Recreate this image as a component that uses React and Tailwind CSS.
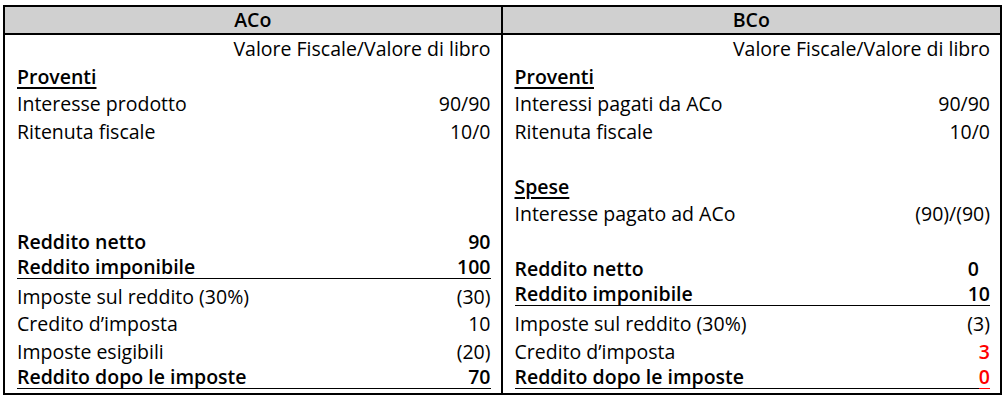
import React from "react";

// Righe della tabella per ciascuna società
const aco = [
  { value: "Valore Fiscale/Valore di libro" },
  { label: "Proventi", head: true },
  { label: "Interesse prodotto", value: "90/90" },
  { label: "Ritenuta fiscale", value: "10/0" },
  {},
  {},
  {},
  { label: "Reddito netto", value: "90", bold: true },
  { label: "Reddito imponibile", value: "100", bold: true, line: true },
  { label: "Imposte sul reddito (30%)", value: "(30)" },
  { label: "Credito d’imposta", value: "10" },
  { label: "Imposte esigibili", value: "(20)" },
  { label: "Reddito dopo le imposte", value: "70", bold: true, line: true },
];

const bco = [
  { value: "Valore Fiscale/Valore di libro" },
  { label: "Proventi", head: true },
  { label: "Interessi pagati da ACo", value: "90/90" },
  { label: "Ritenuta fiscale", value: "10/0" },
  {},
  { label: "Spese", head: true },
  { label: "Interesse pagato ad ACo", value: "(90)/(90)" },
  {},
  { label: "Reddito netto", value: "0", bold: true, shift: true },
  { label: "Reddito imponibile", value: "10", bold: true, line: true },
  { label: "Imposte sul reddito (30%)", value: "(3)" },
  { label: "Credito d’imposta", value: "3", red: true },
  { label: "Reddito dopo le imposte", value: "0", bold: true, line: true, red: true },
];

const Row = ({ label, value, bold, line, red, head, shift }) => {
  const weight = bold ? "font-semibold" : "font-normal";
  // i valori in rosso sono sempre in grassetto
  const valWeight = bold || red ? "font-semibold" : "font-normal";
  const color = red ? "text-[#ff0000]" : "text-black";

  if (head) {
    return (
      <div className="h-[27.5px] flex items-center pl-3 pr-[10px]">
        <span className="font-semibold underline underline-offset-[3px] decoration-[1.5px]">{label}</span>
      </div>
    );
  }

  if (line) {
    return (
      <div className="h-[27.5px] flex items-end pl-3 pr-[10px] pb-[4px]">
        <div className="flex-1 flex border-b-[1.5px] border-black leading-[22px]">
          <span className={weight}>{label}</span>
        </div>
        <span
          className={`${valWeight} ${color} leading-[22px] border-b-[1.5px] ${red ? "border-[#ff0000]" : "border-black"}`}
        >
          {value}
        </span>
      </div>
    );
  }

  return (
    <div className="h-[27.5px] flex items-center justify-between pl-3 pr-[10px]">
      <span className={weight}>{label}</span>
      <span className={`${valWeight} ${color} ${shift ? "pr-[11px]" : ""}`}>{value}</span>
    </div>
  );
};

const Column = ({ title, rows, last }) => (
  <div className={`flex flex-col ${last ? "" : "border-r-2 border-black"}`}>
    <div className="h-[28px] bg-[#d0d0d0] border-b-2 border-black flex items-center justify-center font-semibold">
      {title}
    </div>
    {rows.map((r, i) => (
      <Row key={i} {...r} />
    ))}
  </div>
);

export default function App() {
  return (
    <div className="w-[1006px] h-[401px] bg-white pl-[3px] pt-[5px]">
      <div
        className="w-[999px] grid grid-cols-2 border-2 border-black text-[19.5px] text-black"
        style={{ fontFamily: "'Open Sans', Lato, sans-serif" }}
      >
        <Column title="ACo" rows={aco} />
        <Column title="BCo" rows={bco} last />
      </div>
    </div>
  );
}
